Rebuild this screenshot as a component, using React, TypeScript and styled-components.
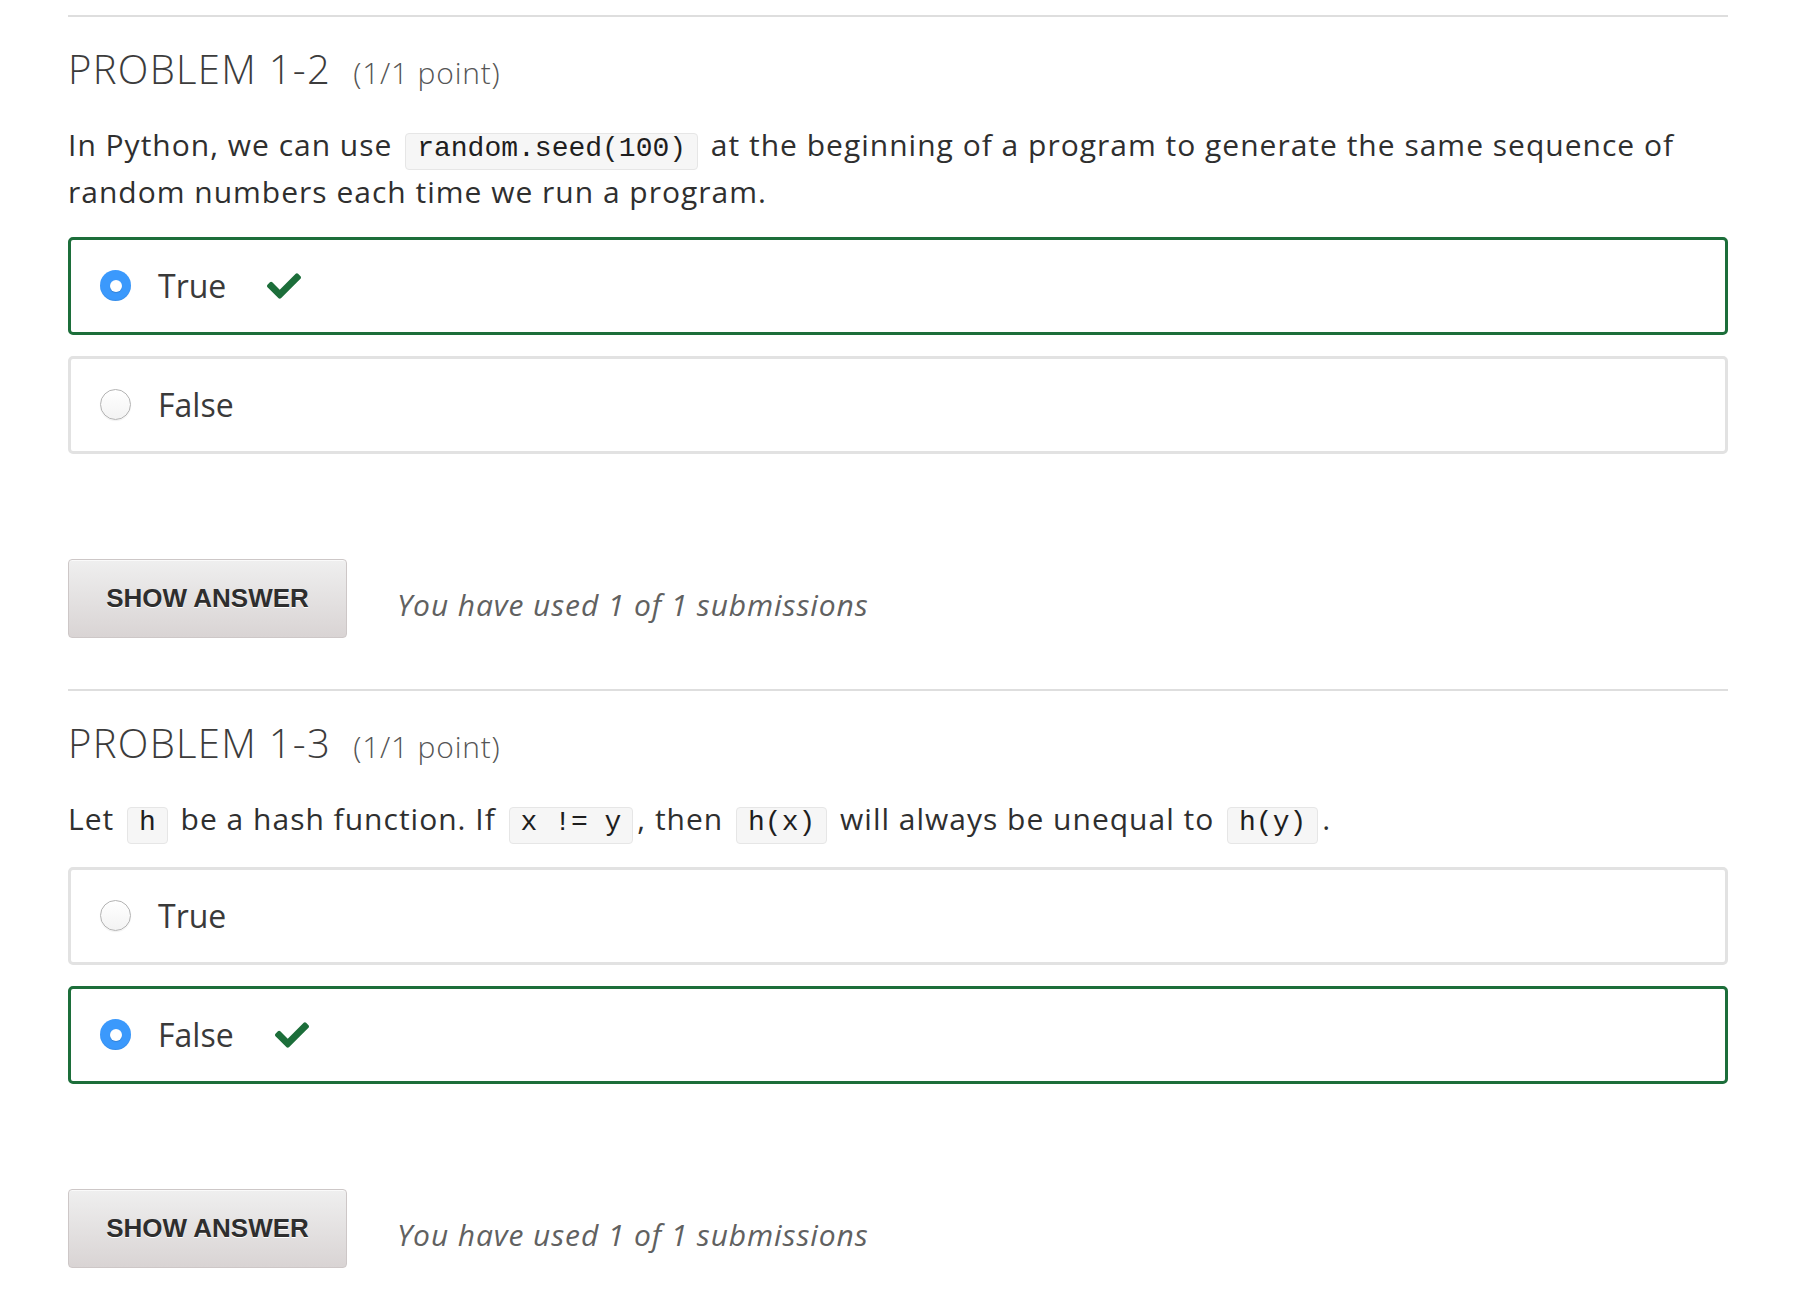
import React from "react";
import styled, { createGlobalStyle } from "styled-components";

const GlobalStyle = createGlobalStyle`
  html, body { margin: 0; padding: 0; background: #ffffff; }
  body { font-family: "Open Sans", "Noto Sans", sans-serif; color: #313131; }
  * { box-sizing: border-box; }
`;

const Page = styled.main`
  width: 1660px;
  margin-left: 68px;
  padding-top: 15px;
`;

const Problem = styled.section`
  border-top: 2px solid #dedede;
  padding-top: 28px;
  padding-bottom: 51px;
`;

const Heading = styled.h3`
  margin: 0;
  font-family: "Open Sans", sans-serif;
  font-weight: 300;
  font-size: 40px;
  line-height: 48px;
  letter-spacing: 1.3px;
  color: #3c3c3c;
`;

const Points = styled.span`
  margin-left: 22px;
  font-size: 30px;
  line-height: 1;
  letter-spacing: 0.8px;
  color: #555;
`;

const Prompt = styled.p`
  margin: 30px 0 0;
  font-size: 30px;
  line-height: 43.5px;
  letter-spacing: 1px;
  color: #2f2f2f;
`;

const Code = styled.code`
  display: inline-block;
  font-family: "Liberation Mono", "Courier New", monospace;
  font-size: 28px;
  line-height: 30px;
  letter-spacing: 0;
  padding: 0 11px 5px;
  margin: 0 4px;
  background: #f6f6f6;
  border: 1px solid #e6e6e6;
  border-radius: 4px;
  color: #1e1e1e;
`;

const Options = styled.div`
  margin-top: 23px;
  display: flex;
  flex-direction: column;
  gap: 21px;
`;

const Option = styled.label<{ $correct?: boolean }>`
  display: flex;
  align-items: center;
  height: 98px;
  padding-left: 29px;
  border: 3px solid ${(p) => (p.$correct ? "#1c6e3a" : "#e2e2e2")};
  border-radius: 5px;
  background: #fff;
`;

const Radio = styled.span<{ $checked?: boolean }>`
  width: 31px;
  height: 31px;
  border-radius: 50%;
  flex: none;
  display: flex;
  align-items: center;
  justify-content: center;
  ${(p) =>
    p.$checked
      ? `background: #3b99fc; box-shadow: inset 0 -1px 1px rgba(0,0,0,0.08);`
      : `background: linear-gradient(#ffffff, #f3f3f3); border: 1px solid #b3b3b3; box-shadow: 0 1px 1px rgba(0,0,0,0.06);`}

  &::after {
    content: "";
    display: ${(p) => (p.$checked ? "block" : "none")};
    width: 12px;
    height: 12px;
    border-radius: 50%;
    background: #fff;
    box-shadow: 0 1px 1px rgba(0,0,0,0.15);
  }
`;

const OptionText = styled.span`
  margin-left: 27px;
  font-size: 32px;
  color: #3a3a3a;
`;

const Check = styled.svg`
  margin-left: 41px;
  width: 34px;
  height: 26px;
  fill: #1c6e3a;
  flex: none;
`;

const Actions = styled.div`
  margin-top: 105px;
  display: flex;
  align-items: center;
  gap: 50px;
`;

const ShowAnswer = styled.button`
  width: 279px;
  height: 79px;
  padding: 1px 0 0;
  border: 1px solid #cdc7c7;
  border-radius: 4px;
  background: linear-gradient(#efefef, #d9d4d4);
  box-shadow: inset 0 1px 0 rgba(255,255,255,0.7);
  font-family: "Liberation Sans", Arial, sans-serif;
  font-weight: 700;
  font-size: 26px;
  color: #2e2e2e;
  text-shadow: 0 1px 0 #ffffff;
  cursor: pointer;
`;

const Submissions = styled.span`
  padding-top: 12px;
  font-size: 30px;
  letter-spacing: 0.9px;
  font-style: italic;
  color: #616161;
`;

const CheckIcon = () => (
  <Check viewBox="0 64 512 384" aria-hidden="true">
    <path d="M173.898 439.404l-166.4-166.4c-9.997-9.997-9.997-26.206 0-36.204l36.203-36.204c9.997-9.998 26.207-9.998 36.204 0L192 312.69 432.095 72.596c9.997-9.997 26.207-9.997 36.204 0l36.203 36.204c9.997 9.997 9.997 26.206 0 36.204l-294.4 294.401c-9.998 9.997-26.207 9.997-36.204-.001z" />
  </Check>
);

type Choice = { label: string; checked: boolean };

const ChoiceRow = ({ label, checked }: Choice) => (
  <Option $correct={checked}>
    <Radio $checked={checked} />
    <OptionText>{label}</OptionText>
    {checked && <CheckIcon />}
  </Option>
);

const Footer = () => (
  <Actions>
    <ShowAnswer type="button">SHOW ANSWER</ShowAnswer>
    <Submissions>You have used 1 of 1 submissions</Submissions>
  </Actions>
);

export default function App() {
  return (
    <>
      <GlobalStyle />
      <Page>
        <Problem>
          <Heading>
            {"PROBLEM 1-2"}
            <Points>(1/1 point)</Points>
          </Heading>
          <Prompt>
            In Python, we can use <Code>random.seed(100)</Code> at the beginning of a program to
            generate the same sequence of random numbers each time we run a program.
          </Prompt>
          <Options>
            <ChoiceRow label="True" checked />
            <ChoiceRow label="False" checked={false} />
          </Options>
          <Footer />
        </Problem>
        <Problem>
          <Heading>
            {"PROBLEM 1-3"}
            <Points>(1/1 point)</Points>
          </Heading>
          <Prompt>
            Let <Code>h</Code> be a hash function. If <Code>x != y</Code>, then <Code>h(x)</Code> will
            always be unequal to <Code>h(y)</Code>.
          </Prompt>
          <Options>
            <ChoiceRow label="True" checked={false} />
            <ChoiceRow label="False" checked />
          </Options>
          <Footer />
        </Problem>
      </Page>
    </>
  );
}
